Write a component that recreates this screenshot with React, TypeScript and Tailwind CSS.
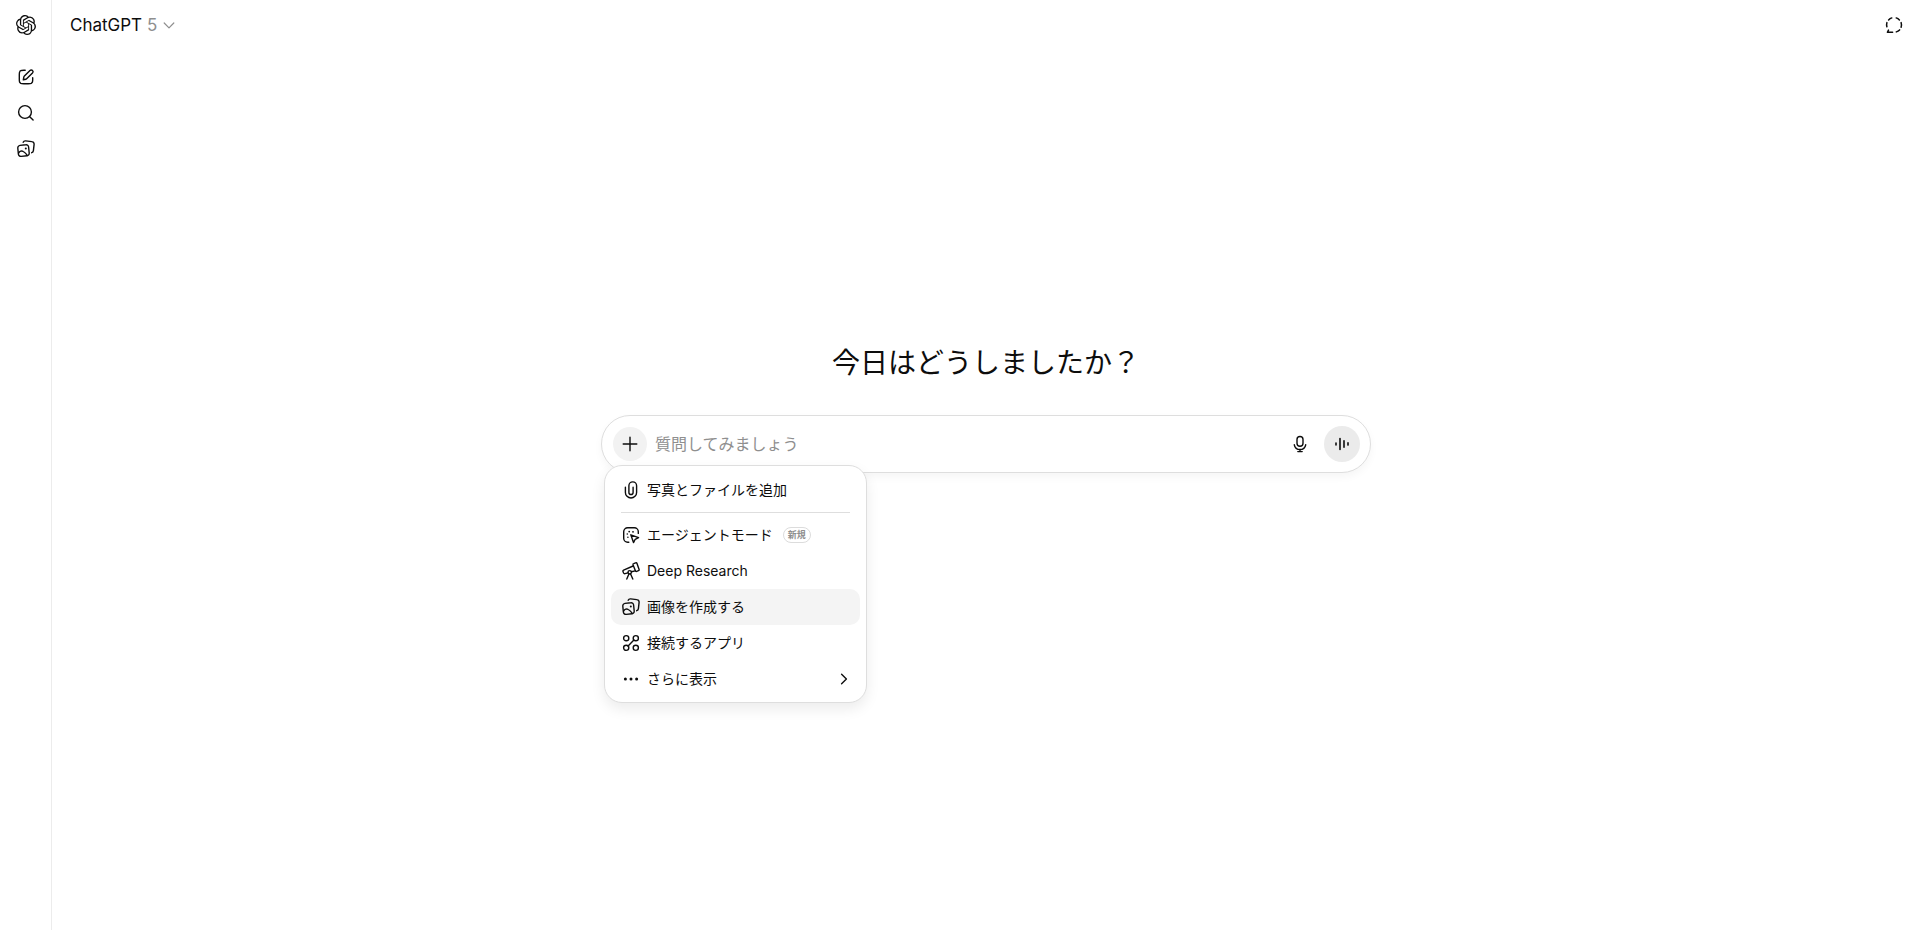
import React from 'react';
import { SiOpenai } from 'react-icons/si';

type IconProps = { className?: string; children?: React.ReactNode };

function Icon({ className = 'size-5', children }: IconProps) {
  return (
    <svg
      viewBox="0 0 20 20"
      fill="none"
      stroke="currentColor"
      strokeWidth="1.4"
      strokeLinecap="round"
      strokeLinejoin="round"
      aria-hidden="true"
      className={className + ' shrink-0'}
    >
      {children}
    </svg>
  );
}

const EditIcon = () => (
  <Icon>
    <path d="M9.2 3.3H7.8c-1.6 0-2.4 0-3 .4-.5.2-.9.6-1.1 1.1-.4.6-.4 1.5-.4 3v4.4c0 1.6 0 2.4.3 3 .3.5.7.9 1.2 1.2.6.3 1.4.3 3 .3h4.400c1.6 0 2.4 0 3-.3.5-.3.9-.7 1.2-1.2.3-.6.3-1.4.3-3v-1.4" />
    <path d="M8.4 9.1 14 3.5a1.75 1.75 0 0 1 2.5 2.5l-5.6 5.6c-.3.3-.6.5-1 .6l-2.6.6.5-2.7c.1-.4.3-.7.6-1Z" />
  </Icon>
);

const SearchIcon = () => (
  <Icon>
    <circle cx="9" cy="9" r="6.4" />
    <path d="m13.7 13.7 3.4 3.4" />
  </Icon>
);

const ImagesIcon = () => (
  <Icon>
    <path d="m4 6.4 5.8-.6A2.5 2.5 0 0 1 12.6 8l.6 6a2.5 2.5 0 0 1-2.2 2.8l-5.8.6a2.5 2.5 0 0 1-2.8-2.2L1.800 9.200A2.5 2.5 0 0 1 4 6.4Z" />
    <path d="M7.2 3.3a2.3 2.3 0 0 1 2.4-1.4l6.2.7a2.5 2.5 0 0 1 2.3 2.8l-.7 6.2a2.5 2.5 0 0 1-1.7 2.1" />
    <path d="M2.6 14.1c1.2-2.1 3-2.6 4.7-1.6 1.5.8 2.9 2.2 4 3.9" />
    <circle cx="9.8" cy="9.4" r="1" fill="currentColor" stroke="none" />
  </Icon>
);

const ClipIcon = () => (
  <Icon>
    <path d="M4.4 7.2v5.2a5.6 5.6 0 0 0 11.2 0V5.7a3.85 3.85 0 0 0-7.7 0v6.7a2.1 2.1 0 0 0 4.2 0V7.2" />
  </Icon>
);

const AgentIcon = () => (
  <Icon>
    <path d="M7.8 17.3H6.7a4 4 0 0 1-4-4V6.7a4 4 0 0 1 4-4h6.6a4 4 0 0 1 4 4v1.7" />
    <path d="m9.8 9.8 2.7 7.8 1.7-3.3 3.4-1.7Z" />
    <g fill="currentColor" stroke="none">
      <circle cx="8.2" cy="6.6" r="0.9" />
      <circle cx="6.3" cy="9" r="0.8" />
      <circle cx="12" cy="6.8" r="0.9" />
      <circle cx="6.9" cy="12.2" r="0.8" />
    </g>
  </Icon>
);

const TelescopeIcon = () => (
  <Icon>
    <path d="m12.7 2.6 1.9-.7c.7-.2 1.2 0 1.4.6l2.1 5.9c.2.6 0 1.1-.6 1.3l-1.8.7c-.6.2-1.1 0-1.3-.6l-2.3-5.9c-.2-.6 0-1.1.6-1.3Z" />
    <path d="M12.1 5 2.6 9.1c-.7.3-.9.8-.6 1.4l.6 1.5c.3.6.8.8 1.4.6l2.9-.8M14.2 9.9l-3.7.9" />
    <circle cx="8.7" cy="11.3" r="1.7" />
    <path d="M7.9 13 5.8 18m3.8-5 2.2 5" />
  </Icon>
);

const AppsIcon = () => (
  <Icon>
    <circle cx="5.2" cy="5.2" r="2.6" />
    <circle cx="14.8" cy="5.2" r="2.6" />
    <circle cx="5.2" cy="14.8" r="2.6" />
    <circle cx="14.8" cy="14.8" r="2.6" />
    <path d="m7.1 12.9 5.8-5.8" />
  </Icon>
);

const DotsIcon = () => (
  <Icon>
    <g fill="currentColor" stroke="none">
      <circle cx="4.4" cy="10" r="1.5" />
      <circle cx="10" cy="10" r="1.5" />
      <circle cx="15.6" cy="10" r="1.5" />
    </g>
  </Icon>
);

const ChevronRight = () => (
  <Icon className="ml-auto size-3">
    <path d="m6 2 8 8-8 8" strokeWidth="2.3" />
  </Icon>
);

const MicIcon = () => (
  <Icon>
    <rect x="7" y="2.5" width="6" height="9.8" rx="3" />
    <path d="M4.3 10.8a5.8 5.8 0 0 0 11.4 0M10 15.4v2.2M7.8 17.6h4.4" />
  </Icon>
);

const VoiceIcon = () => (
  <Icon>
    <path d="M4 9v2M8 4.6v10.8M12 6.8v6.4M16 8.9v2.2" strokeWidth="1.6" />
  </Icon>
);

const TemporaryChatIcon = () => (
  <Icon>
    <path
      d="M4.6 4.9a7.4 7.4 0 0 1 3.2-2M12.2 2.9a7.4 7.4 0 0 1 3.2 2M17.1 7.6a7.4 7.4 0 0 1 0 4.6M15.6 14.9a7.4 7.4 0 0 1-3.3 2M2.9 7.6a7.4 7.4 0 0 0 0 4.2M8.6 17.3H3.4l1.1-2.2"
      strokeWidth="1.5"
    />
  </Icon>
);

function RailButton({ label, children }: { label: string; children: React.ReactNode }) {
  return (
    <button type="button" aria-label={label} className="flex size-9 items-center justify-center rounded-lg hover:bg-gray-100">
      {children}
    </button>
  );
}

function MenuItem({ icon, active, children }: { icon: React.ReactNode; active?: boolean; children: React.ReactNode }) {
  return (
    <button
      type="button"
      role="menuitem"
      className={
        'flex h-9 w-full items-center gap-1.5 rounded-[10px] px-2.5 text-left text-sm ' +
        (active ? 'bg-[#f4f4f4]' : 'hover:bg-[#f4f4f4]')
      }
    >
      {icon}
      {children}
    </button>
  );
}

export default function App() {
  return (
    <div className="flex min-h-screen bg-white font-['Inter','Noto_Sans_CJK_JP',sans-serif] text-[#0d0d0d]">
      <nav className="flex w-13 shrink-0 flex-col items-center border-r border-[#ececec] pt-[7px]">
        <RailButton label="ChatGPT">
          <SiOpenai className="size-5" />
        </RailButton>
        <div className="mt-4 flex flex-col">
          <RailButton label="新しいチャット"><EditIcon /></RailButton>
          <RailButton label="検索"><SearchIcon /></RailButton>
          <RailButton label="ライブラリ"><ImagesIcon /></RailButton>
        </div>
      </nav>

      <div className="flex min-w-0 flex-1 flex-col">
        <header className="flex h-13 items-center justify-between pb-0.5 pr-2 pl-[18px]">
          <button type="button" className="flex items-center gap-1 text-[17px] leading-7 font-normal">
            <span>ChatGPT <span className="text-[#8f8f8f]">5</span></span>
            <Icon className="size-4 text-[#8f8f8f]">
              <path d="m4 7.5 6 6 6-6" strokeWidth="1.5" />
            </Icon>
          </button>
          <RailButton label="一時チャット"><TemporaryChatIcon /></RailButton>
        </header>

        <main className="flex flex-1 flex-col items-center px-4 pt-[293px]">
          <h1 className="mb-[34px] text-[28px] leading-9 font-normal">今日はどうしましたか？</h1>

          <div className="relative w-full max-w-[770px]">
            <form className="flex h-[58px] items-center rounded-full border border-[#dedede] bg-white pr-2.5 pl-[11px] shadow-[0_4px_8px_rgba(0,0,0,0.04)]">
              <button type="button" aria-label="追加" className="flex size-[34px] shrink-0 items-center justify-center rounded-full bg-[#f2f2f2]">
                <Icon>
                  <path d="M10 3.2v13.6M3.2 10h13.6" />
                </Icon>
              </button>
              <input
                type="text"
                aria-label="質問してみましょう"
                placeholder="質問してみましょう"
                className="ml-2 min-w-0 flex-1 bg-transparent text-base outline-none placeholder:text-[#8f8f8f]"
              />
              <button type="button" aria-label="音声入力" className="flex size-9 items-center justify-center rounded-full">
                <MicIcon />
              </button>
              <button type="button" aria-label="音声モード" className="ml-1.5 flex size-9 items-center justify-center rounded-full bg-[#ebebeb]">
                <VoiceIcon />
              </button>
            </form>

            <div
              role="menu"
              className="absolute top-[50px] left-[3px] w-[263px] rounded-[18px] border border-[#dedede] bg-white px-1.5 pt-[6px] pb-[5px] shadow-[0_6px_14px_rgba(0,0,0,0.08)]"
            >
              <MenuItem icon={<ClipIcon />}>写真とファイルを追加</MenuItem>
              <hr className="mx-2.5 my-1 border-[#dedede]" />
              <MenuItem icon={<AgentIcon />}>
                エージェントモード
                <span className="ml-1 flex h-4 items-center rounded-full border border-[#dcdcdc] px-1 text-[9px] font-bold text-[#8f8f8f]">
                  新規
                </span>
              </MenuItem>
              <MenuItem icon={<TelescopeIcon />}>Deep Research</MenuItem>
              <MenuItem icon={<ImagesIcon />} active>画像を作成する</MenuItem>
              <MenuItem icon={<AppsIcon />}>接続するアプリ</MenuItem>
              <MenuItem icon={<DotsIcon />}>
                さらに表示
                <ChevronRight />
              </MenuItem>
            </div>
          </div>
        </main>
      </div>
    </div>
  );
}
